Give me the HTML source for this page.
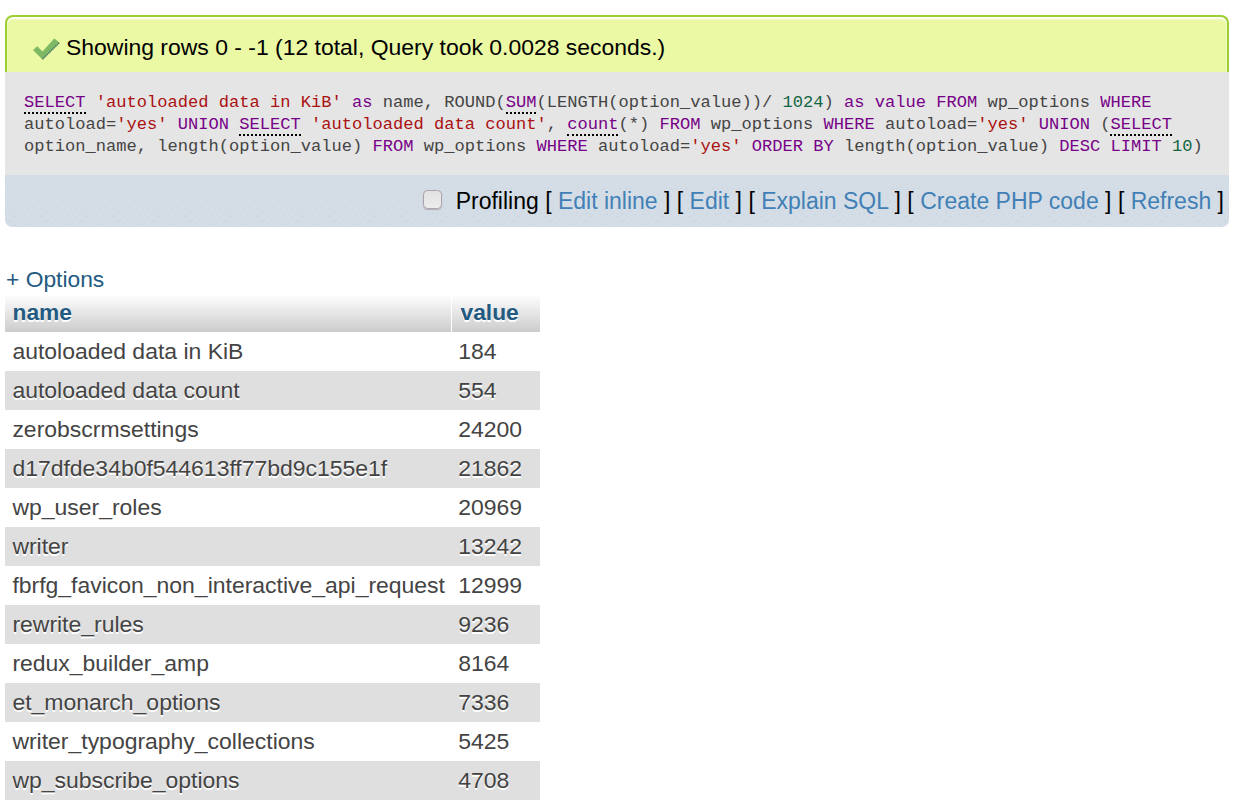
<!DOCTYPE html>
<html lang="en">
<head>
<meta charset="utf-8">
<title>phpMyAdmin query result</title>
<style>
html,body{margin:0;padding:0;background:#fff;}
body{width:1234px;height:807px;overflow:hidden;position:relative;font-family:"Liberation Sans",Arial,sans-serif;color:#444;}
.success{position:absolute;left:5px;top:15px;width:1224px;height:57px;box-sizing:border-box;border:2px solid #9ccf31;border-bottom:none;background:#ebf8a4;border-radius:8px 8px 0 0;box-shadow:inset 0 2px 2px #fff;color:#000;}
.success .msg{position:absolute;left:59px;top:16.5px;font-size:22.95px;line-height:26px;white-space:nowrap;}
.success svg{position:absolute;left:-7px;top:-17px;}
.sql{position:absolute;left:5px;top:72px;width:1224px;height:103px;background:#e5e5e5;}
.sql pre{margin:0;position:absolute;left:19px;top:20.1px;font-family:"Liberation Mono",monospace;font-size:17.09px;line-height:22px;color:#444;white-space:pre;}
.k{color:#770088;}
.s{color:#aa1111;}
.n{color:#116644;}
.u{border-bottom:2px dotted #000;}
.tools{position:absolute;left:5px;top:175px;width:1224px;height:52px;background:#d4dde5;border-radius:0 0 7px 7px;overflow:hidden;}
.tools .dots{position:absolute;left:0;top:0;}
.tools .t{position:absolute;right:5px;top:12px;font-size:23px;line-height:28px;color:#000;white-space:nowrap;}
.tools a{color:#4180b6;text-decoration:none;}
.cb{position:absolute;left:418px;top:15px;width:19px;height:19px;box-sizing:border-box;border:1px solid #ada3ab;border-radius:4.5px;background:linear-gradient(#e2e2e2,#ececec);box-shadow:0 1px 1px rgba(120,90,110,.35);}
.opt{position:absolute;left:6px;top:264.5px;font-size:22.8px;line-height:28px;color:#235a81;white-space:nowrap;}
table{position:absolute;left:5px;top:294px;width:535px;table-layout:fixed;border-collapse:separate;border-spacing:0;font-size:22.96px;text-shadow:0 1.75px 0 #fff;}
th{height:38px;padding:0 8px 1px 7.5px;box-sizing:border-box;text-align:left;font-weight:bold;color:#235a81;background:linear-gradient(#fff,#ccc);font-size:22.75px;}
th.c1{width:446px;}
th.c2{width:89px;border-left:1px solid #fff;padding-left:8.5px;}
td{height:39px;padding:0 0 0 7.4px;box-sizing:border-box;color:#444;white-space:nowrap;}
td+td{padding-left:7.3px;}
tr.e td{background:#dfdfdf;}
tr.o td{background:#fff;}
</style>
</head>
<body>
<div class="success">
<svg width="80" height="80" viewBox="0 0 80 80"><path d="M33 50 L37.3 46.2 L42.5 51.6 L54.2 38.4 L59.8 42.7 L42.5 59.6 Z" fill="#7fb865"/><path d="M42.5 59.2 L59.4 42.7" stroke="#2f5f6a" stroke-width="1.4" stroke-dasharray="1.2 0.8" fill="none" opacity=".85"/></svg>
<div class="msg">Showing rows 0 - -1 (12 total, Query took 0.0028 seconds.)</div>
</div>
<div class="sql"><pre><span class="k u">SELECT</span> <span class="s">'autoloaded data in KiB'</span> <span class="k">as</span> name, ROUND(<span class="k u">SUM</span>(LENGTH(option_value))/ <span class="n">1024</span>) <span class="k">as</span> <span class="k">value</span> <span class="k">FROM</span> wp_options <span class="k">WHERE</span>
autoload=<span class="s">'yes'</span> <span class="k">UNION</span> <span class="k u">SELECT</span> <span class="s">'autoloaded data count'</span>, <span class="k u">count</span>(*) <span class="k">FROM</span> wp_options <span class="k">WHERE</span> autoload=<span class="s">'yes'</span> <span class="k">UNION</span> (<span class="k u">SELECT</span>
option_name, length(option_value) <span class="k">FROM</span> wp_options <span class="k">WHERE</span> autoload=<span class="s">'yes'</span> <span class="k">ORDER BY</span> length(option_value) <span class="k">DESC</span> <span class="k">LIMIT</span> <span class="n">10</span>)</pre></div>
<div class="tools"><svg class="dots" width="1224" height="52"><defs><pattern id="dp" width="36" height="52" patternUnits="userSpaceOnUse"><rect x="7" y="8" width="1" height="1" fill="#cde6e2"/><rect x="12" y="7" width="1" height="1" fill="#cde6e2"/><rect x="16" y="8" width="1" height="1" fill="#cde6e2"/><rect x="21" y="7" width="1" height="1" fill="#cde6e2"/><rect x="25" y="8" width="1" height="1" fill="#cde6e2"/><rect x="29" y="7" width="1" height="1" fill="#cde6e2"/><rect x="34" y="8" width="1" height="1" fill="#cde6e2"/><rect x="3" y="7" width="1" height="1" fill="#cde6e2"/><rect x="8" y="13" width="1" height="1" fill="#bed3e6"/><rect x="13" y="13" width="1" height="1" fill="#bed3e6"/><rect x="18" y="13" width="1" height="1" fill="#bed3e6"/><rect x="23" y="13" width="1" height="1" fill="#bed3e6"/><rect x="28" y="13" width="1" height="1" fill="#bed3e6"/><rect x="33" y="13" width="1" height="1" fill="#bed3e6"/><rect x="2" y="13" width="1" height="1" fill="#bed3e6"/><rect x="5" y="19" width="1" height="1" fill="#bed3e6"/><rect x="12" y="20" width="1" height="1" fill="#bed3e6"/><rect x="18" y="20" width="1" height="1" fill="#bed3e6"/><rect x="24" y="20" width="1" height="1" fill="#bed3e6"/><rect x="30" y="20" width="1" height="1" fill="#bed3e6"/><rect x="0" y="20" width="1" height="1" fill="#bed3e6"/><rect x="8" y="25" width="1" height="1" fill="#bed3e6"/><rect x="13" y="27" width="1" height="1" fill="#bed3e6"/><rect x="21" y="26" width="1" height="1" fill="#bed3e6"/><rect x="25" y="27" width="1" height="1" fill="#bed3e6"/><rect x="33" y="26" width="1" height="1" fill="#bed3e6"/><rect x="2" y="27" width="1" height="1" fill="#bed3e6"/><rect x="4" y="28" width="1" height="1" fill="#bed3e6"/><rect x="17" y="31" width="1" height="1" fill="#bed3e6"/><rect x="29" y="31" width="1" height="1" fill="#bed3e6"/><rect x="8" y="33" width="1" height="1" fill="#bed3e6"/><rect x="13" y="35" width="1" height="1" fill="#bed3e6"/><rect x="23" y="34" width="1" height="1" fill="#bed3e6"/><rect x="35" y="33" width="1" height="1" fill="#bed3e6"/><rect x="4" y="35" width="1" height="1" fill="#bed3e6"/><rect x="5" y="38" width="1" height="1" fill="#bed3e6"/><rect x="10" y="41" width="1" height="1" fill="#bed3e6"/><rect x="14" y="44" width="1" height="1" fill="#bed3e6"/><rect x="18" y="39" width="1" height="1" fill="#bed3e6"/><rect x="23" y="44" width="1" height="1" fill="#bed3e6"/><rect x="26" y="39" width="1" height="1" fill="#bed3e6"/><rect x="31" y="38" width="1" height="1" fill="#bed3e6"/><rect x="35" y="41" width="1" height="1" fill="#bed3e6"/><rect x="3" y="45" width="1" height="1" fill="#bed3e6"/><rect x="6" y="46" width="1" height="1" fill="#bed3e6"/><rect x="18" y="47" width="1" height="1" fill="#bed3e6"/><rect x="10" y="50" width="1" height="1" fill="#bed3e6"/><rect x="26" y="49" width="1" height="1" fill="#bed3e6"/><rect x="31" y="46" width="1" height="1" fill="#bed3e6"/><rect x="35" y="50" width="1" height="1" fill="#bed3e6"/></pattern></defs><rect width="1224" height="52" fill="url(#dp)"/></svg><span class="cb"></span><div class="t">Profiling [ <a>Edit inline</a> ] [ <a>Edit</a> ] [ <a>Explain SQL</a> ] [ <a>Create PHP code</a> ] [ <a>Refresh</a> ]</div></div>
<div class="opt">+ Options</div>
<table>
<tr><th class="c1">name</th><th class="c2">value</th></tr>
<tr class="o"><td>autoloaded data in KiB</td><td>184</td></tr>
<tr class="e"><td>autoloaded data count</td><td>554</td></tr>
<tr class="o"><td>zerobscrmsettings</td><td>24200</td></tr>
<tr class="e"><td>d17dfde34b0f544613ff77bd9c155e1f</td><td>21862</td></tr>
<tr class="o"><td>wp_user_roles</td><td>20969</td></tr>
<tr class="e"><td>writer</td><td>13242</td></tr>
<tr class="o"><td>fbrfg_favicon_non_interactive_api_request</td><td>12999</td></tr>
<tr class="e"><td>rewrite_rules</td><td>9236</td></tr>
<tr class="o"><td>redux_builder_amp</td><td>8164</td></tr>
<tr class="e"><td>et_monarch_options</td><td>7336</td></tr>
<tr class="o"><td>writer_typography_collections</td><td>5425</td></tr>
<tr class="e"><td>wp_subscribe_options</td><td>4708</td></tr>
</table>
</body>
</html>
